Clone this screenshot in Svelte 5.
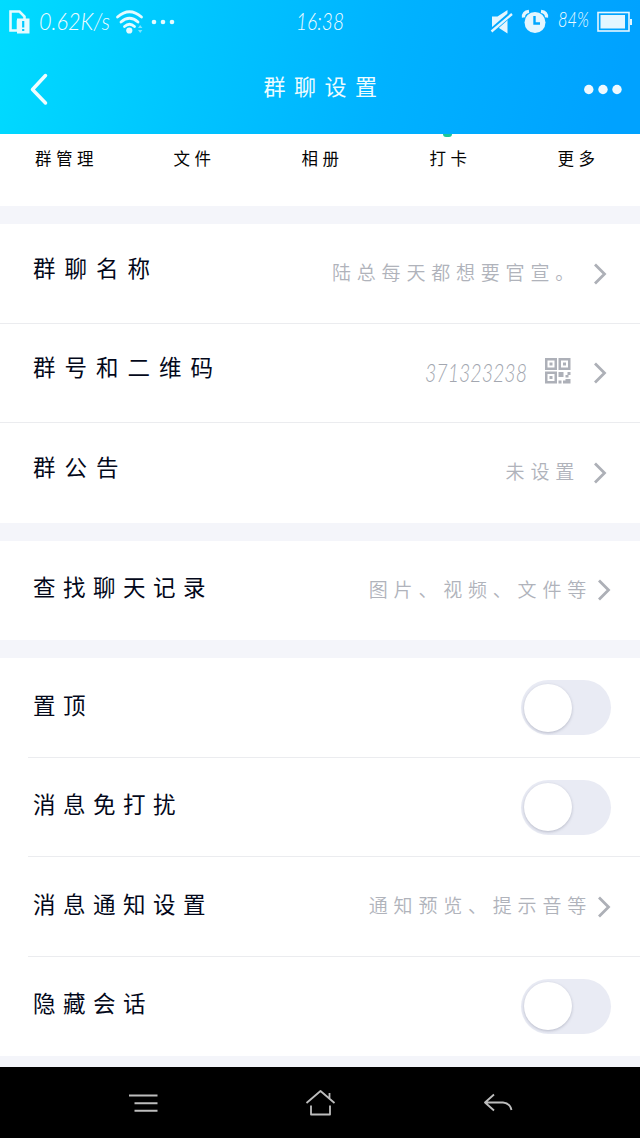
<script lang="ts">
    type Row = { label: string; value?: string; number?: boolean; toggle?: boolean };

    const tabs = ['群管理', '文件', '相册', '打卡', '更多'];

    const sections: { kind: string; rows: Row[] }[] = [
        {
            kind: 'info',
            rows: [
                { label: '群聊名称', value: '陆总每天都想要官宣。' },
                { label: '群号和二维码', value: '371323238', number: true },
                { label: '群公告', value: '未设置' }
            ]
        },
        {
            kind: 'history',
            rows: [{ label: '查找聊天记录', value: '图片、视频、文件等' }]
        },
        {
            kind: 'prefs',
            rows: [
                { label: '置顶', toggle: true },
                { label: '消息免打扰', toggle: true },
                { label: '消息通知设置', value: '通知预览、提示音等' },
                { label: '隐藏会话', toggle: true }
            ]
        }
    ];

    let enabled: Record<string, boolean> = $state({});
</script>

<div class="screen">
    <header>
        <div class="status">
            <div class="status-side">
                <svg width="21" height="24" viewBox="0 0 21 24">
                    <path d="M1.5 1.5h9l5 5v5H9v9H1.5z" fill="none" stroke="#e4fbff" stroke-width="2.6" />
                    <path d="M8 8.5h12.5v15H8z" fill="#e4fbff" />
                    <path d="M14.2 11v6.5M14.2 19v2" stroke="#00c8ff" stroke-width="2.2" />
                </svg>
                <svg class="speed" width="74" height="24" viewBox="0 0 74 24">
                    <text class="thin" x="1" y="19.5" font-size="23" textLength="71" lengthAdjust="spacingAndGlyphs">0.62K/s</text>
                </svg>
                <svg width="28" height="24" viewBox="0 0 28 24">
                    <g fill="none" stroke="#e4fbff" stroke-width="2.8" stroke-linecap="round">
                        <path d="M1.5 7q12-10.5 24 0M5 12q8.5-7.5 17 0M8.5 16.5q5-4.5 10 0" />
                    </g>
                    <circle cx="13.3" cy="20.5" r="3.1" fill="#e4fbff" />
                    <path d="M22 18l2.2-3 2.2 3zM22 20l2.2 3 2.2-3z" fill="#7be4ff" />
                </svg>
                <svg class="more-small" width="24" height="24" viewBox="0 0 24 24" fill="#e4fbff">
                    <circle cx="3" cy="12" r="2.3" /><circle cx="12" cy="12" r="2.3" /><circle cx="21" cy="12" r="2.3" />
                </svg>
            </div>
            <svg width="50" height="24" viewBox="0 0 50 24">
                <text class="thin" x="1" y="20" font-size="24" textLength="48" lengthAdjust="spacingAndGlyphs">16:38</text>
            </svg>
            <div class="status-side right">
                <svg width="22" height="24" viewBox="0 0 22 24">
                    <path d="M1 6.5h5.500L16.5 0v23.500L6.500 17H1z" fill="#e4f6ff" />
                    <path d="M1 20.500L21 3" stroke="#00a9ff" stroke-width="5" />
                    <path d="M.5 21.500L21 4" stroke="#e4f6ff" stroke-width="2.400" />
                </svg>
                <svg class="alarm" width="26" height="24" viewBox="0 0 26 24">
                    <path d="M1.5 7.5Q1 2 7 1.3M24.5 7.5Q25 2 19 1.3" fill="none" stroke="#e4f6ff" stroke-width="3.2" />
                    <circle cx="13" cy="12.5" r="10.5" fill="#e4f6ff" />
                    <path d="M12.5 6v7.5h5.5" fill="none" stroke="#00a7ff" stroke-width="2.4" />
                </svg>
                <svg width="33" height="24" viewBox="0 0 33 24">
                    <text class="thin" x="1" y="16.5" font-size="21" textLength="31" lengthAdjust="spacingAndGlyphs">84%</text>
                </svg>
                <svg class="battery" width="36" height="24" viewBox="0 0 36 24">
                    <rect x="1" y="2.5" width="31" height="18.5" fill="none" stroke="#e4f6ff" stroke-width="1.6" />
                    <rect x="3.5" y="5" width="24.5" height="13.5" fill="#e4f6ff" />
                    <path d="M34 9v6" stroke="#e4f6ff" stroke-width="2" />
                </svg>
            </div>
        </div>
        <div class="titlebar">
            <button class="back" aria-label="返回">
                <svg width="20" height="34" viewBox="0 0 20 34">
                    <path d="M16.5 3.5L3.5 17.5l13 13.500" fill="none" stroke="#f0fdff" stroke-width="3.5" stroke-linecap="round" stroke-linejoin="round" />
                </svg>
            </button>
            <h1>群聊设置</h1>
            <button class="menu" aria-label="更多">
                <svg width="38" height="12" viewBox="0 0 38 12" fill="#eef9ff">
                    <circle cx="4.8" cy="6.5" r="4.7" /><circle cx="19" cy="6.5" r="4.7" /><circle cx="33" cy="6.5" r="4.7" />
                </svg>
            </button>
        </div>
    </header>

    <nav class="tabs">
        {#each tabs as tab}
            <div class="tab" class:active={tab === '打卡'}>{tab}</div>
        {/each}
    </nav>

    {#each sections as section}
        <section class={section.kind}>
            {#each section.rows as row}
                <div class="row">
                    <span class="label">{row.label}</span>
                    {#if row.toggle}
                        <button
                            class="toggle"
                            class:on={enabled[row.label]}
                            role="switch"
                            aria-checked={!!enabled[row.label]}
                            aria-label={row.label}
                            onclick={() => (enabled[row.label] = !enabled[row.label])}
                        >
                            <span class="knob"></span>
                        </button>
                    {:else}
                        {#if row.number}
                            <svg class="number" width="106" height="26" viewBox="0 0 106 26">
                                <text class="thin" x="3" y="21.5" font-size="25" textLength="102" lengthAdjust="spacingAndGlyphs">{row.value}</text>
                            </svg>
                            <svg class="qr" width="26" height="26" viewBox="0 0 26 26" fill="#adb0b8">
                                <path fill-rule="evenodd" d="M0 0h12v12H0zM2.5 2.5v7h7v-7zM13.5 0h12v12h-12zM16 2.5v7h7v-7zM0 13.5h12v12H0zM2.5 16v7h7v-7z" />
                                <path d="M4.5 4.5h3v3h-3zM18 4.5h3v3h-3zM4.5 18h3v3h-3zM13.5 14h5v5h-5zM22.5 14h3v3h-3zM20.5 17h3v2.5h-3zM13.5 22.5h3v3h-3zM18 22.5h2.5V21h5v4.5H18z" />
                            </svg>
                        {:else}
                            <span class="value">{row.value}</span>
                        {/if}
                        <svg class="chevron" width="14" height="22" viewBox="0 0 14 22">
                            <path d="M2 1.5l9.5 9.5L2 20.5" fill="none" stroke="#adb0b7" stroke-width="2.8" />
                        </svg>
                    {/if}
                </div>
            {/each}
        </section>
    {/each}

    <footer>
        <svg width="30" height="20" viewBox="0 0 30 20" fill="none" stroke="#bdbdbd" stroke-width="1.9">
            <path d="M1 2.5h28.5M6.5 10.2h23M6.5 17.8h23" />
        </svg>
        <svg width="30" height="28" viewBox="0 0 30 28" fill="none" stroke="#bdbdbd" stroke-width="1.8" stroke-linejoin="round">
            <path d="M1.5 14L15.500 2l14 12M24.500 9V4M6 16.500v9h19v-9" />
        </svg>
        <svg width="30" height="20" viewBox="0 0 30 20" fill="none" stroke="#bdbdbd" stroke-width="1.8" stroke-linejoin="round">
            <path d="M12 1.5L3 9.500l9 8M3 9.500h18q7 .5 8.500 7.500" />
        </svg>
    </footer>
</div>

<style>
    :global(body) {
        margin: 0;
        background: #f4f5fa;
    }
    .screen {
        width: 640px;
        height: 1138px;
        display: flex;
        flex-direction: column;
        overflow: hidden;
        background: #f4f5fa;
        font-family: "Liberation Sans", "Noto Sans CJK SC", sans-serif;
        font-weight: 400;
    }
    svg {
        display: block;
        flex: none;
        overflow: visible;
    }
    button {
        display: block;
        padding: 0;
        border: none;
        background: none;
        cursor: pointer;
    }
    .thin {
        font-family: Lato, "Liberation Sans", sans-serif;
        font-style: italic;
        font-weight: 300;
        fill: #effcff;
    }
    header {
        height: 134px;
        flex: none;
        background: linear-gradient(105deg, #00dcff 0%, #00c4ff 32%, #00b2ff 60%, #00a2ff 95%);
    }
    .status {
        height: 44px;
        display: grid;
        grid-template-columns: 1fr 50px 1fr;
        align-items: center;
    }
    .status-side {
        display: flex;
        align-items: center;
        padding-left: 9px;
    }
    .right {
        justify-content: flex-end;
        padding: 0 7px 0 0;
    }
    .speed {
        margin: 0 4px 0 8px;
    }
    .more-small {
        margin-left: 7px;
    }
    .alarm {
        margin: 0 9px 0 9px;
    }
    .battery {
        margin-left: 7px;
    }
    .titlebar {
        height: 90px;
        display: grid;
        grid-template-columns: 60px 1fr 60px;
        align-items: center;
    }
    .back {
        margin-left: 29px;
    }
    .menu {
        margin-left: 4px;
    }
    h1 {
        margin: 0 0 3px 9px;
        font-size: 22px;
        font-weight: 400;
        line-height: 32px;
        letter-spacing: 8.5px;
        text-align: center;
        color: #eefcff;
    }
    .tabs {
        height: 72px;
        flex: none;
        display: grid;
        grid-template-columns: repeat(5, 1fr);
        background: #fff;
    }
    .tab {
        position: relative;
        padding: 13px 0 0 5px;
        font-size: 16.5px;
        line-height: 24px;
        letter-spacing: 4.5px;
        text-align: center;
        color: #050505;
    }
    .active::before {
        content: '';
        position: absolute;
        top: 0;
        left: 59px;
        width: 9px;
        height: 3px;
        border-radius: 0 0 6px 6px;
        background: #19c79a;
    }
    section {
        margin-top: 18px;
        background: #fff;
    }
    .row {
        position: relative;
        height: 99.5px;
        box-sizing: border-box;
        display: flex;
        align-items: center;
        padding: 0 29px 0 33px;
    }
    .row + .row::before {
        content: '';
        position: absolute;
        top: -1px;
        left: 0;
        right: 0;
        height: 1px;
        background: #ebecef;
    }
    .prefs .row + .row::before {
        left: 28px;
    }
    .label {
        margin: 0 auto 2px 0;
        font-size: 22.5px;
        line-height: 32px;
        letter-spacing: 7.5px;
        color: #03081a;
    }
    .info .label {
        margin-bottom: 8px;
        letter-spacing: 9px;
    }
    .value {
        margin-bottom: 3px;
        font-family: "Noto Sans CJK SC DemiLight", "Noto Sans CJK SC", sans-serif;
        font-size: 19px;
        font-weight: 350;
        line-height: 28px;
        letter-spacing: 5.8px;
        color: #b0b3bb;
        white-space: nowrap;
    }
    .number .thin {
        fill: #a3a7b0;
    }
    .qr {
        margin: 0 22px 5px 17px;
    }
    .info .row {
        padding-right: 33px;
    }
    .info .value {
        margin-right: 13px;
    }
    .chevron {
        margin-left: 5px;
    }
    .info .chevron {
        margin-left: 0;
    }
    .toggle {
        width: 90px;
        height: 55px;
        box-sizing: border-box;
        padding: 3px;
        border-radius: 28px;
        background: #e9ebf4;
    }
    .knob {
        display: block;
        width: 48px;
        height: 48px;
        border-radius: 50%;
        background: #fff;
        box-shadow: 0 1px 3px rgba(90, 95, 120, 0.35);
        transition: transform 0.2s;
    }
    .on {
        background: #12b7f5;
    }
    .on .knob {
        transform: translateX(36px);
    }
    footer {
        height: 71px;
        flex: none;
        margin-top: auto;
        display: grid;
        grid-template-columns: 30px 30px 30px;
        gap: 147px;
        justify-content: center;
        align-items: center;
        background: #000;
    }
</style>
